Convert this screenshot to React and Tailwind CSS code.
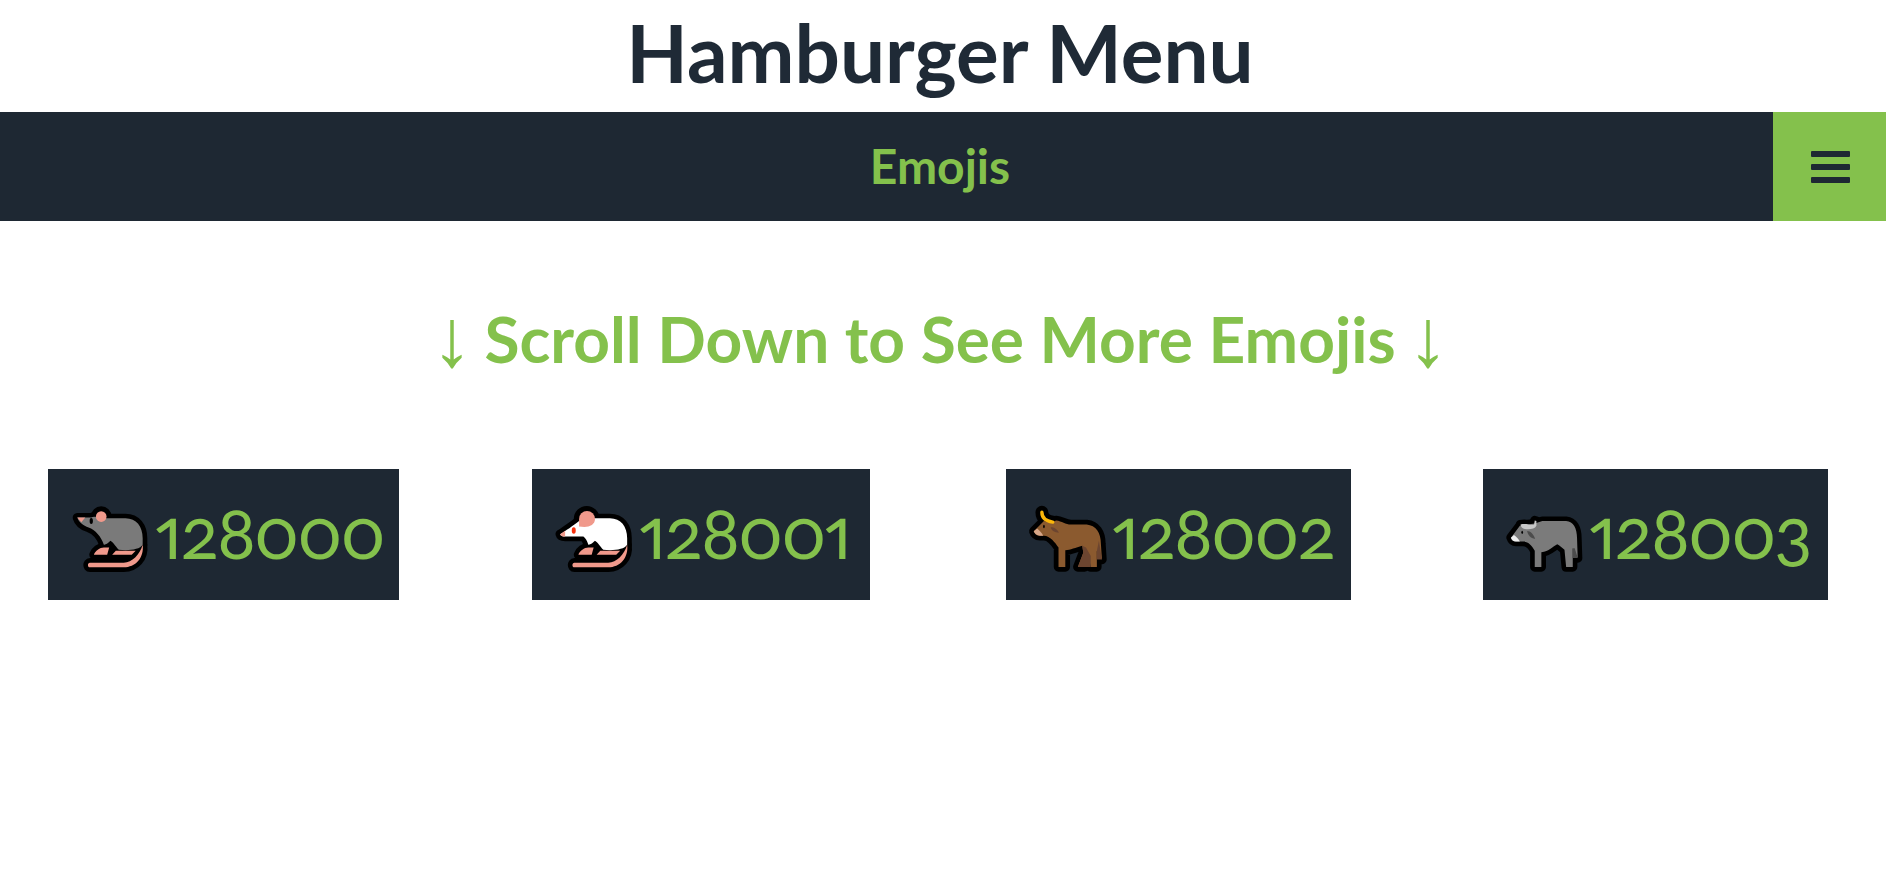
const K = "#000";

function Emoji({ box, outline, children }) {
  return (
    <svg viewBox={box} className="h-[66px] w-[76px] shrink-0 overflow-visible" preserveAspectRatio="xMidYMax meet">
      <g fill={K} stroke={K} strokeWidth="28" strokeLinejoin="round" strokeLinecap="round">
        {outline}
      </g>
      {children}
    </svg>
  );
}

const PINK = "#f0998b";
const tail = "M88 204H190C215 204 238 180 247 150C252 190 225 218 190 218H88C80 218 80 204 88 204Z";
const feet = "M100 180C104 168 118 158 130 158H146L140 180Z M155 180L166 168H226L214 180Z";

const ratBody = "M50 68H92C100 62 112 68 130 70H195C228 70 247 95 247 130V150C238 165 205 168 175 165C165 155 158 142 150 138C140 148 134 150 130 150C122 125 104 105 84 98C68 93 54 82 50 68Z";

function GrayRat() {
  return (
    <Emoji box="35 33 227 199" outline={<>
      <path d={ratBody} /><circle cx="122" cy="65" r="17" />
      <path d={feet} /><path d={tail} />
    </>}>
      <path d={ratBody} fill="#7a7a7a" />
      <circle cx="122" cy="65" r="16" fill={PINK} />
      <path d="M50 68H74L62 82Z" fill={PINK} />
      <ellipse cx="92" cy="78" rx="5" ry="9" fill="#000" />
      <path d={feet} fill={PINK} />
      <path d={tail} fill={PINK} />
    </Emoji>
  );
}

const wBody = "M45 118C60 108 85 92 102 78L130 70H195C228 70 247 95 247 130V150C238 165 205 168 175 165C165 155 158 142 150 138C140 148 134 150 130 150C126 138 122 130 115 125H60C52 125 46 122 45 118Z";

function WhiteRat() {
  return (
    <Emoji box="30 33 228 199" outline={<>
      <path d={wBody} /><circle cx="125" cy="72" r="25" />
      <path d={feet} /><path d={tail} />
    </>}>
      <path d={wBody} fill="#ffffff" />
      <path d="M102 95V72A24 24 0 0 1 150 72C150 88 135 96 118 96Z" fill={PINK} />
      <path d="M45 118L60 108V125C52 125 46 122 45 118Z" fill={PINK} />
      <ellipse cx="86" cy="107" rx="6" ry="10" fill="#f8320e" />
      <path d={feet} fill={PINK} />
      <path d={tail} fill={PINK} />
    </Emoji>
  );
}

const bBody = "M42 112L72 82C85 86 95 86 108 80C125 82 135 92 152 92H198C225 95 240 115 240 150L243 195L228 170V217H210L205 190L192 217H172L188 175L185 155C165 160 150 168 135 168V217H115V160C105 145 90 125 72 125H60C50 125 44 118 42 112Z";

function Bull() {
  return (
    <Emoji box="28 40 224 192" outline={<>
      <path d={bBody} />
      <path d="M66 56C66 72 78 82 98 85" fill="none" strokeWidth="38" />
    </>}>
      <path d={bBody} fill="#8b5a2f" />
      <path d="M185 155L196 160L210 185V217H192H172L188 175Z M228 170L234 140L243 195L228 195Z" fill="#6c4530" />
      <path d="M42 112L52 104C60 110 66 118 70 125H60C50 125 44 118 42 112Z" fill="#d6a688" />
      <path d="M92 100C102 100 112 106 116 116C104 116 94 110 92 100Z" fill="#6c4530" />
      <ellipse cx="72" cy="98" rx="2.5" ry="5" fill="#000" />
      <path d="M66 56C66 72 78 82 98 85" fill="none" stroke="#fcb70a" strokeWidth="10" strokeLinecap="round" />
    </Emoji>
  );
}

const fBody = "M33 128L60 92L105 85L128 78H200C222 80 233 100 233 130L235 190L220 160V217H200L195 165C188 158 180 152 173 148C160 155 148 170 125 172V217H105V168C96 150 85 140 70 140H48C40 140 35 134 33 128Z";
const horn = "M62 88C80 84 95 92 103 88L105 76L110 78L110 92C105 102 90 104 75 102C68 100 62 95 62 88Z";

function Buffalo() {
  return (
    <Emoji box="18 35 230 197" outline={<><path d={fBody} /><path d={horn} /></>}>
      <path d={fBody} fill="#7b7b7b" />
      <path d="M220 160L226 160L235 190H220Z" fill="#4c4c4c" />
      <path d="M33 128L42 120C50 126 56 132 60 140H48C40 140 35 134 33 128Z" fill="#eeeeee" />
      <path d={horn} fill="#c8c8c8" />
      <path d="M82 108C92 108 102 118 106 132C92 130 84 120 82 108Z" fill="#4c4c4c" />
      <ellipse cx="67" cy="112" rx="2.5" ry="5" fill="#000" />
    </Emoji>
  );
}

const cards = [
  { n: "128000", w: "w-[351px]", pad: "pl-[24px]", gap: "ml-[7px]", ml: "", E: GrayRat },
  { n: "128001", w: "w-[338px]", pad: "pl-[23px]", gap: "ml-[8px]", ml: "ml-[133px]", E: WhiteRat },
  { n: "128002", w: "w-[345px]", pad: "pl-[23px]", gap: "ml-[7px]", ml: "ml-[136px]", E: Bull },
  { n: "128003", w: "w-[345px]", pad: "pl-[23px]", gap: "ml-[7px]", ml: "ml-[132px]", E: Buffalo },
];

export default function App() {
  return (
    <div className="min-h-[874px] bg-white font-['Lato','Liberation_Sans',sans-serif]">
      <h1 className="h-[112px] pr-[6px] text-center text-[80px] leading-[104px] font-bold text-[#1f2a36]">Hamburger Menu</h1>
      <nav className="relative h-[109px] bg-[#1e2833] pr-[6px] text-center text-[48px] leading-[107px] font-bold text-[#84c14c]">
        Emojis
        <button className="absolute right-0 top-0 flex h-[109px] w-[113px] flex-col items-center justify-center gap-[7px] bg-[#84c14c] pl-[2px]">
          <span className="block h-[6px] w-[39px] rounded-[1px] bg-[#1e2833]" />
          <span className="block h-[6px] w-[39px] rounded-[1px] bg-[#1e2833]" />
          <span className="block h-[6px] w-[39px] rounded-[1px] bg-[#1e2833]" />
        </button>
      </nav>
      <h2 className="flex h-[159px] items-center justify-center gap-[12px] pt-[76px] pr-[6px] text-[64px] leading-[84px] font-bold text-[#84c14c]">
        <span className="font-['Liberation_Serif'] text-[82px] leading-[84px] font-normal">↓</span>
        <span>Scroll Down to See More Emojis</span>
        <span className="font-['Liberation_Serif'] text-[82px] leading-[84px] font-normal">↓</span>
      </h2>
      <div className="mt-[89px] flex pl-[48px]">
        {cards.map(({ n, w, pad, gap, ml, E }) => (
          <div key={n} className={`flex h-[131px] items-start bg-[#1e2833] pt-[37px] ${w} ${pad} ${ml}`}>
            <E />
            <span className={`text-[71px] leading-[51px] font-normal tracking-[-2px] text-[#84c14c] oldstyle-nums proportional-nums ${gap}`}>{n}</span>
          </div>
        ))}
      </div>
    </div>
  );
}
